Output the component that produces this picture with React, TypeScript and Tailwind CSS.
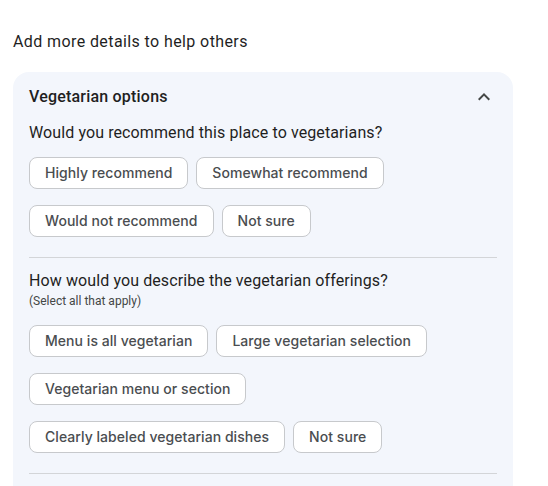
import React from 'react';

const font = { fontFamily: 'Roboto, "Noto Sans", Arial, sans-serif' };
const chipFont = { fontFamily: 'Inter, Roboto, Arial, sans-serif' };

function Chip({ label }: { label: string }) {
  return (
    <button
      className="h-8 px-[15px] rounded-lg border border-[#c7c9cc] bg-white text-sm font-medium text-[#4a4d50] tracking-[0.05px]"
      style={chipFont}
    >
      {label}
    </button>
  );
}

export default function App() {
  const first = ['Highly recommend', 'Somewhat recommend', 'Would not recommend', 'Not sure'];
  const second = [
    'Menu is all vegetarian',
    'Large vegetarian selection',
    'Vegetarian menu or section',
    'Clearly labeled vegetarian dishes',
    'Not sure',
  ];

  return (
    <div className="w-[548px] h-[486px] bg-white overflow-hidden text-[#1f1f1f]" style={font}>
      <div className="pl-[13px] pr-[35px] pt-[30px]">
        <h2 className="text-base leading-6 tracking-[0.4px]">Add more details to help others</h2>

        <div className="mt-[18px] rounded-2xl bg-[#f3f6fc] px-4 pt-[13px] h-[500px]">
          <div className="flex items-center justify-between h-6">
            <span className="text-base font-medium leading-6 tracking-[0.2px]">Vegetarian options</span>
            <svg className="w-6 h-6 mr-[1px] text-[#444746]" viewBox="0 0 24 24" fill="currentColor">
              <path d="M7.41 15.41L12 10.83l4.59 4.58L18 14l-6-6-6 6z" />
            </svg>
          </div>

          <p className="mt-3 text-base leading-6 tracking-[0.1px]">Would you recommend this place to vegetarians?</p>
          <div className="mt-3 flex flex-wrap gap-x-2 gap-y-4">
            {first.map((l) => (
              <Chip key={l} label={l} />
            ))}
          </div>

          <div className="mt-5 border-t border-[#d3d5d8]" />

          <p className="mt-[11px] text-base leading-6 tracking-[0.1px]">How would you describe the vegetarian offerings?</p>
          <p className="text-xs leading-4 text-[#444746]">(Select all that apply)</p>
          <div className="mt-4 flex flex-wrap gap-x-2 gap-y-4 pr-[60px]">
            {second.map((l, i) => (
              <Chip key={l + i} label={l} />
            ))}
          </div>

          <div className="mt-5 border-t border-[#d3d5d8]" />
        </div>
      </div>
    </div>
  );
}
